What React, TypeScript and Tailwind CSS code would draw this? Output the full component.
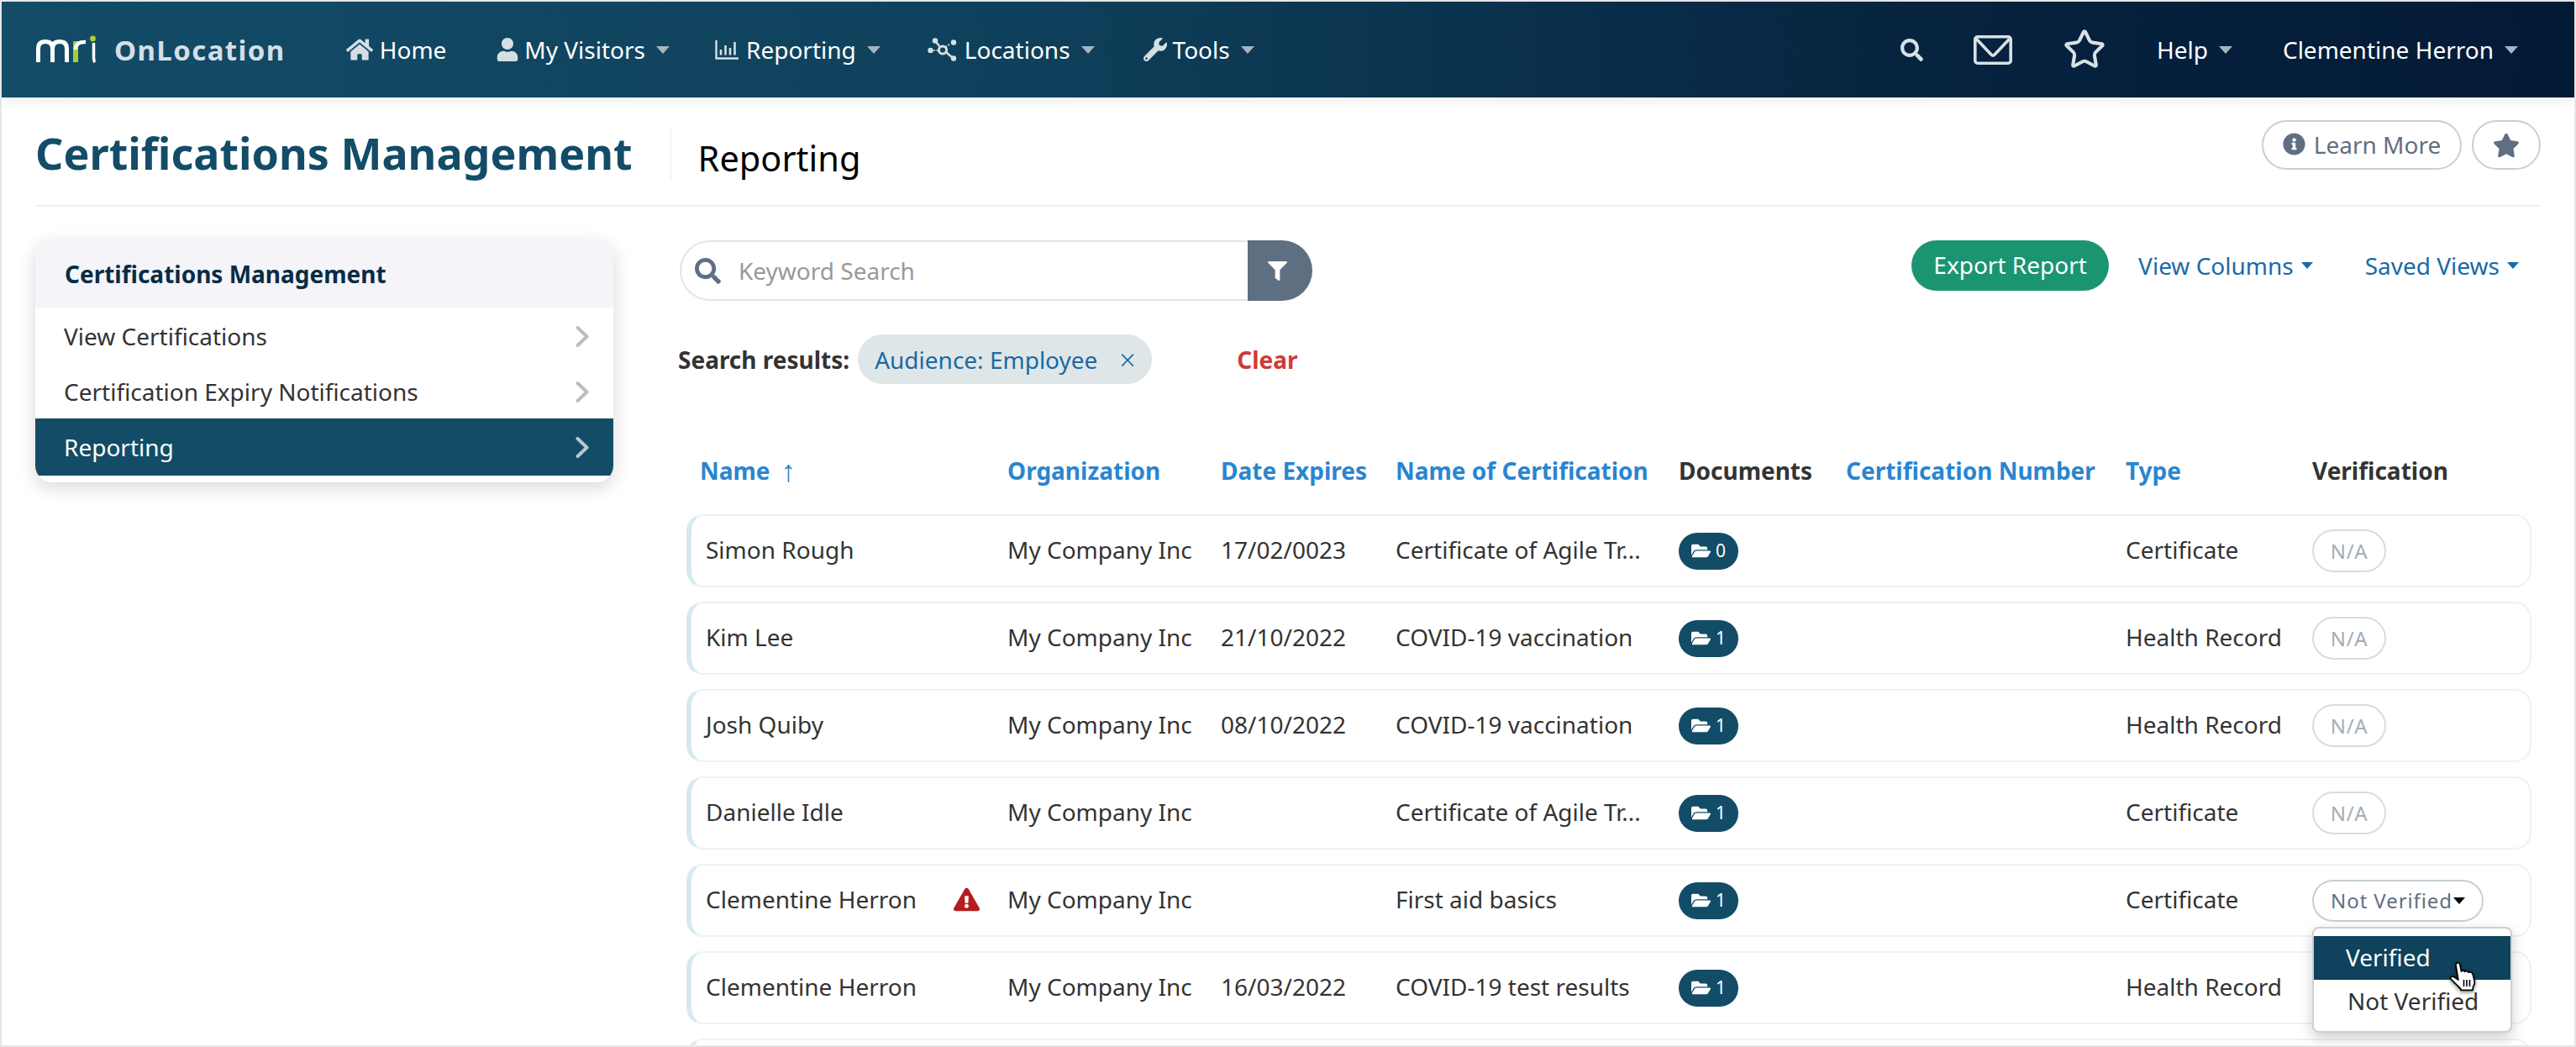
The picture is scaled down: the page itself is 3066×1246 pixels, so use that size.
import React from "react";
import { FaHome, FaUser, FaWrench, FaSearch, FaInfoCircle, FaStar, FaFilter, FaFolderOpen, FaExclamationTriangle } from "react-icons/fa";
import { Star } from "lucide-react";

const Caret = () => (
  <span className="inline-block w-0 h-0 border-x-[8px] border-x-transparent border-t-[9px] border-t-[#a7b5be]" />
);
const SmallCaret = ({ color }: { color: string }) => (
  <span className={"inline-block w-0 h-0 border-x-[7px] border-x-transparent border-t-[8px] " + color} />
);

const Logo = () => (
  <svg width="72" height="36" viewBox="0 0 72 36" fill="none">
    <path d="M3.5 33 V17 C3.5 11 7 8.5 12 8.5 C17 8.5 20.5 11 20.5 17 V33 M20.5 17 C20.5 11 24 8.5 29 8.5 C34 8.5 37.5 11 37.5 17 V33" stroke="#ffffff" strokeWidth="5" />
    <path d="M48 33 V8" stroke="#a6ce39" strokeWidth="6" />
    <path d="M48 18 C48 11 53 8.5 60 9" stroke="#ffffff" strokeWidth="4.5" />
    <path d="M69.5 10 V27 C69.5 30 70 32 71 33" stroke="#ffffff" strokeWidth="3.5" />
    <circle cx="68.5" cy="5" r="3.4" fill="#a6ce39" />
  </svg>
);

const ChartIcon = () => (
  <svg width="28" height="26" viewBox="0 0 28 26" fill="none" stroke="#d5dfe4">
    <path d="M1.5 2 V23.5 H28" strokeWidth="2.4" />
    <path d="M7 13 V19.5" strokeWidth="2.6" />
    <path d="M12.5 8 V19.5" strokeWidth="2.6" />
    <path d="M18 11 V19.5" strokeWidth="2.6" />
    <path d="M23.5 4 V19.5" strokeWidth="2.6" />
  </svg>
);

const NodesIcon = () => (
  <svg width="36" height="28" viewBox="0 0 36 28" fill="none" stroke="#d5dfe4">
    <circle cx="18" cy="14.5" r="4.6" strokeWidth="3" />
    <path d="M14 10 L9 3" strokeWidth="2.4" />
    <path d="M22 17 L30 24" strokeWidth="2.4" />
    <path d="M21.5 11 L27 7" strokeWidth="1.6" strokeDasharray="2 1.5" />
    <path d="M7 15 L13 15" strokeWidth="1.6" strokeDasharray="2 1.5" />
    <circle cx="9" cy="3.5" r="3.2" fill="#d5dfe4" stroke="none" />
    <circle cx="31" cy="5.5" r="3.2" fill="#d5dfe4" stroke="none" />
    <circle cx="31" cy="24.5" r="3.2" fill="#d5dfe4" stroke="none" />
    <circle cx="3.5" cy="15" r="3.2" fill="#d5dfe4" stroke="none" />
  </svg>
);

const MailIcon = () => (
  <svg width="46" height="35" viewBox="0 0 46 35" fill="none" stroke="#d9e1e5" strokeWidth="3.6">
    <rect x="1.8" y="1.8" width="42.4" height="31.4" rx="3" />
    <path d="M3 4 L21 23 Q23 25 25 23 L43 4" />
  </svg>
);

const Chevron = ({ color }: { color: string }) => (
  <svg width="16" height="25" viewBox="0 0 16 25" fill="none" stroke={color} strokeWidth="4" strokeLinecap="round" strokeLinejoin="round">
    <path d="M2.5 2 L13.5 12.5 L2.5 23" />
  </svg>
);

const Hand = () => (
  <svg width="32" height="36" viewBox="0 0 32 36" className="drop-shadow-[0_2px_2px_rgba(0,0,0,0.45)]">
    <path
      d="M9 2.2 C10.5 1 12.4 1.8 12.8 3.6 L14.6 12 C15 10.6 18 10.4 18.6 12.4 C19.4 11 22.4 11.2 23 13.2 C24.2 12.2 27.4 12.6 28.2 15.2 L30.4 24 C30.8 27 29.6 29 28.6 30.6 L28 34.4 H14.4 C13.6 32 11.4 30.4 9.6 28.6 L2.2 21.4 C1 20 2 17.8 4 18 C6 18.2 9.4 21 10.8 22 L8 4.8 C7.9 3.8 8.2 2.8 9 2.2 Z"
      fill="#ffffff"
      stroke="#000000"
      strokeWidth="1.8"
      strokeLinejoin="round"
    />
    <path d="M17.5 22 V30 M21 22 V30 M24.5 22 V30" stroke="#000000" strokeWidth="1.6" />
  </svg>
);

const NavItem = ({ icon, label, caret, className }: { icon?: React.ReactNode; label: string; caret?: boolean; className: string }) => (
  <div className={"flex items-center text-white text-[28px] leading-none " + className}>
    {icon}
    <span>{label}</span>
    {caret && <span className="ml-[13px] flex items-center"><Caret /></span>}
  </div>
);

type Row = { name: string; warn?: boolean; date: string; cert: string; docs: number; type: string; verify?: "na" | "open" };

const rows: Row[] = [
  { name: "Simon Rough", date: "17/02/0023", cert: "Certificate of Agile Tr...", docs: 0, type: "Certificate", verify: "na" },
  { name: "Kim Lee", date: "21/10/2022", cert: "COVID-19 vaccination", docs: 1, type: "Health Record", verify: "na" },
  { name: "Josh Quiby", date: "08/10/2022", cert: "COVID-19 vaccination", docs: 1, type: "Health Record", verify: "na" },
  { name: "Danielle Idle", date: "", cert: "Certificate of Agile Tr...", docs: 1, type: "Certificate", verify: "na" },
  { name: "Clementine Herron", warn: true, date: "", cert: "First aid basics", docs: 1, type: "Certificate", verify: "open" },
  { name: "Clementine Herron", date: "16/03/2022", cert: "COVID-19 test results", docs: 1, type: "Health Record" },
];

const headCols = "grid grid-cols-[382px_254px_208px_337px_199px_333px_222px_261px] items-center";
const rowCols = "grid grid-cols-[376px_254px_208px_337px_199px_333px_222px_259px] items-center";

export default function App() {
  return (
    <div className="w-[3066px] h-[1246px] overflow-hidden border-2 border-[#e6e6e6] bg-white font-['Noto_Sans',sans-serif] text-[#333333]">
      <nav className="h-[114px] flex items-center bg-[linear-gradient(90deg,#134c67_0%,#0f405b_40%,#06233f_75%,#031a36_100%)] shadow-[0_4px_14px_rgba(0,0,0,0.08)]">
        <div className="ml-[40px]"><Logo /></div>
        <span className="ml-[22px] text-[33px] leading-none font-bold tracking-[1.4px] text-[#d5dfe4]">OnLocation</span>
        <NavItem className="ml-[72px]" icon={<FaHome size={32} color="#d5dfe4" className="mr-[8px]" />} label="Home" />
        <NavItem className="ml-[59px]" icon={<FaUser size={28} color="#d5dfe4" className="mr-[6px]" />} label="My Visitors" caret />
        <NavItem className="ml-[54px]" icon={<span className="mr-[9px] flex"><ChartIcon /></span>} label="Reporting" caret />
        <NavItem className="ml-[56px]" icon={<span className="mr-[8px] flex"><NodesIcon /></span>} label="Locations" caret />
        <NavItem className="ml-[58px]" icon={<FaWrench size={28} color="#d5dfe4" className="mr-[7px]" />} label="Tools" caret />
        <div className="ml-auto flex items-center">
          <FaSearch size={27} color="#d9e1e5" />
          <span className="ml-[60px] flex"><MailIcon /></span>
          <span className="ml-[60px] flex"><Star size={52} color="#d9e1e5" strokeWidth={1.9} /></span>
          <NavItem className="ml-[60px]" label="Help" caret />
          <NavItem className="ml-[60px] mr-[67px]" label="Clementine Herron" caret />
        </div>
      </nav>

      <div className="pl-[40px] pr-[40px]">
        <header className="h-[130px] border-b-2 border-[#eff2f2] flex items-start">
          <h1 className="mt-[35px] pb-[1px] text-[52px] leading-[62px] font-bold text-[#134c67] pr-[45px] border-r border-[#e8ecec]">Certifications Management</h1>
          <span className="mt-[47px] ml-[32px] text-[41.5px] leading-[50px] text-black">Reporting</span>
          <div className="ml-auto mt-[27px] flex items-center gap-[12px]">
            <button className="h-[59px] w-[238px] rounded-full border-2 border-[#c4d0d4] flex items-center justify-center gap-[10px] pb-[2px] text-[28px] text-[#5f6f82]">
              <FaInfoCircle size={27} color="#5f6f82" />
              Learn More
            </button>
            <button className="h-[59px] w-[82px] rounded-full border-2 border-[#c4d0d4] flex items-center justify-center">
              <FaStar size={32} color="#5f6f82" />
            </button>
          </div>
        </header>

        <div className="flex items-start">
          <aside className="mt-[40px] w-[688px] h-[288px] rounded-[20px] overflow-hidden bg-white shadow-[0_6px_22px_rgba(0,0,0,0.16)] shrink-0">
            <div className="h-[80px] bg-[#f4f4f9] flex items-center pl-[35px] text-[28px] font-bold text-[#082c45]">Certifications Management</div>
            <div className="h-[66px] pt-[2px] flex items-center justify-between pl-[34px] pr-[29px] text-[28px] text-[#333333]"><span>View Certifications</span><Chevron color="#bdbdbd" /></div>
            <div className="h-[66px] pt-[2px] flex items-center justify-between pl-[34px] pr-[29px] text-[28px] text-[#333333]"><span>Certification Expiry Notifications</span><Chevron color="#bdbdbd" /></div>
            <div className="h-[68px] flex items-center justify-between pl-[34px] pr-[29px] text-[28px] text-white bg-[#134c67]"><span>Reporting</span><Chevron color="#b9c7cf" /></div>
          </aside>

          <main className="ml-[79px] w-[2215px] shrink-0 relative">
            <div className="mt-[40px] flex items-start">
              <div className="w-[753px] h-[72px] flex rounded-full">
                <div className="flex-1 flex items-center pl-[16px] border-2 border-r-0 border-[#dfe6e8] rounded-l-full">
                  <FaSearch size={31} color="#5f6f82" />
                  <span className="ml-[21px] text-[28px] text-[#999999]">Keyword Search</span>
                </div>
                <div className="w-[77px] bg-[#5f6f82] rounded-r-full flex items-center justify-center pr-[6px]">
                  <FaFilter size={23} color="#ffffff" />
                </div>
              </div>
              <div className="ml-auto flex items-center">
                <button className="h-[60px] w-[235px] pb-[2px] rounded-full bg-[#1b9472] text-white text-[28px] flex items-center justify-center">Export Report</button>
                <span className="ml-[35px] text-[28px] text-[#1a6aa5] flex items-center gap-[9px]">View Columns<SmallCaret color="border-t-[#1a6aa5]" /></span>
                <span className="ml-[62px] mr-[26px] text-[28px] text-[#1a6aa5] flex items-center gap-[9px]">Saved Views<SmallCaret color="border-t-[#1a6aa5]" /></span>
              </div>
            </div>

            <div className="mt-[40px] flex items-center h-[59px]">
              <span className="ml-[-2px] text-[28px] font-bold text-[#333333]">Search results:</span>
              <div className="ml-[10px] h-[59px] w-[350px] rounded-full bg-[#dfe6e8] flex items-center pl-[20px] text-[28px] text-[#1a6aa5]">
                Audience: Employee
                <span className="ml-[26px] text-[34px] leading-none font-light">×</span>
              </div>
              <span className="ml-[101px] text-[28px] font-bold text-[#d03a3a]">Clear</span>
            </div>

            <div className={"mt-[73px] h-[60px] ml-[8px] w-[2196px] text-[28px] font-bold text-[#2a85cf] " + headCols}>
              <div className="pl-[16px] flex items-center">Name <span className="ml-[13px] text-[36px] leading-none font-normal">↑</span></div>
              <div>Organization</div>
              <div>Date Expires</div>
              <div>Name of Certification</div>
              <div className="text-[#333333]">Documents</div>
              <div>Certification Number</div>
              <div>Type</div>
              <div className="text-[#333333]">Verification</div>
            </div>

            <div className="mt-[22px] ml-[8px] w-[2196px] flex flex-col gap-[17px]">
              {rows.map((r, i) => (
                <div key={i} className={"h-[87px] rounded-[20px] border-2 border-[#eef2f2] border-l-[6px] border-l-[#d6eaef] text-[28px] text-[#333333] " + rowCols}>
                  <div className="pl-[17px] pb-[3px] flex items-center justify-between pr-[33px]">
                    <span>{r.name}</span>
                    {r.warn && <FaExclamationTriangle size={31} color="#b71c1c" />}
                  </div>
                  <div className="pb-[3px]">My Company Inc</div>
                  <div className="pb-[3px]">{r.date}</div>
                  <div className="pb-[3px]">{r.cert}</div>
                  <div>
                    <span className="h-[44px] w-[71px] rounded-full bg-[#134c67] text-white text-[21px] flex items-center justify-center gap-[6px]">
                      <FaFolderOpen size={23} color="#ffffff" />
                      {r.docs}
                    </span>
                  </div>
                  <div></div>
                  <div className="pb-[3px]">{r.type}</div>
                  <div className="relative">
                    {r.verify === "na" && (
                      <span className="h-[51px] w-[88px] rounded-full border-2 border-[#d3dee2] text-[#a2adb8] text-[24px] tracking-[0.6px] flex items-center justify-center">N/A</span>
                    )}
                    {r.verify === "open" && (
                      <>
                        <span className="h-[50px] w-[204px] rounded-full border-2 border-[#c4d0d4] text-[#5f6f82] text-[24px] tracking-[0.9px] flex items-center justify-center gap-[1px]">
                          Not Verified
                          <SmallCaret color="border-t-[#000000]" />
                        </span>
                        <div className="absolute left-0 top-[56px] w-[238px] h-[126px] bg-white rounded-[8px] border-2 border-[#cfcfcf] shadow-[0_6px_16px_rgba(0,0,0,0.2)] pt-[9px] z-10 text-[28px]">
                          <div className="h-[52px] pb-[2px] bg-[#0f425c] text-white flex items-center pl-[38px]">Verified</div>
                          <div className="h-[52px] pb-[2px] flex items-center pl-[40px]">Not Verified</div>
                          <div className="absolute left-[161px] top-[39px]"><Hand /></div>
                        </div>
                      </>
                    )}
                  </div>
                </div>
              ))}
              <div className="h-[87px] rounded-[20px] border-2 border-[#eef2f2] border-l-[6px] border-l-[#d6eaef]" />
            </div>
          </main>
        </div>
      </div>
    </div>
  );
}
